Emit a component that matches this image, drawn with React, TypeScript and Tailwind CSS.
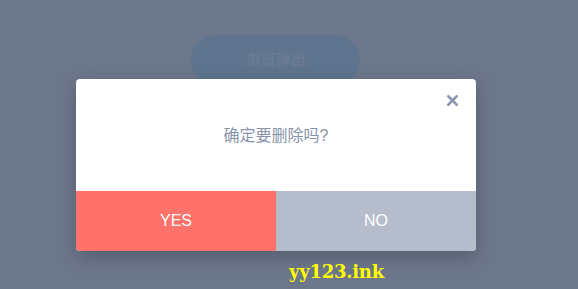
import { X } from 'lucide-react';

export default function App() {
  return (
    <div
      className="relative w-[578px] h-[289px] overflow-hidden bg-[#6d778b]"
      style={{ fontFamily: '"Liberation Sans", "Noto Sans CJK SC", sans-serif' }}
    >
      {/* Page behind the overlay */}
      <div className="flex pt-[35px] pl-[191px]">
        <button className="w-[169px] h-[50px] rounded-full bg-[#5e748f] text-[15px] font-bold text-[#6c7b93]">
          浏览弹出
        </button>
      </div>

      {/* Modal */}
      <div className="absolute left-[76px] top-[79px] w-[400px] rounded-[4px] bg-white overflow-hidden shadow-[0_6px_18px_rgba(40,48,64,0.35)]">
        <div className="relative h-[112px] flex items-center justify-center">
          <button className="absolute right-[15px] top-[13px] text-[#8c97ad]">
            <X className="w-[17px] h-[17px]" strokeWidth={3.5} />
          </button>
          <p className="text-[16px] text-[#8893ab] pt-[2px]">确定要删除吗?</p>
        </div>
        <div className="flex h-[60px]">
          <button className="flex-1 bg-[#ff726a] text-white text-[16px]">YES</button>
          <button className="flex-1 bg-[#b5bccb] text-white text-[16px]">NO</button>
        </div>
      </div>

      {/* Watermark */}
      <div
        className="absolute left-[289px] top-[258px] text-[18px] font-bold text-[#ffff00] tracking-[-0.25px]"
        style={{ fontFamily: '"DejaVu Serif", serif' }}
      >
        yy123.ink
      </div>
    </div>
  );
}
